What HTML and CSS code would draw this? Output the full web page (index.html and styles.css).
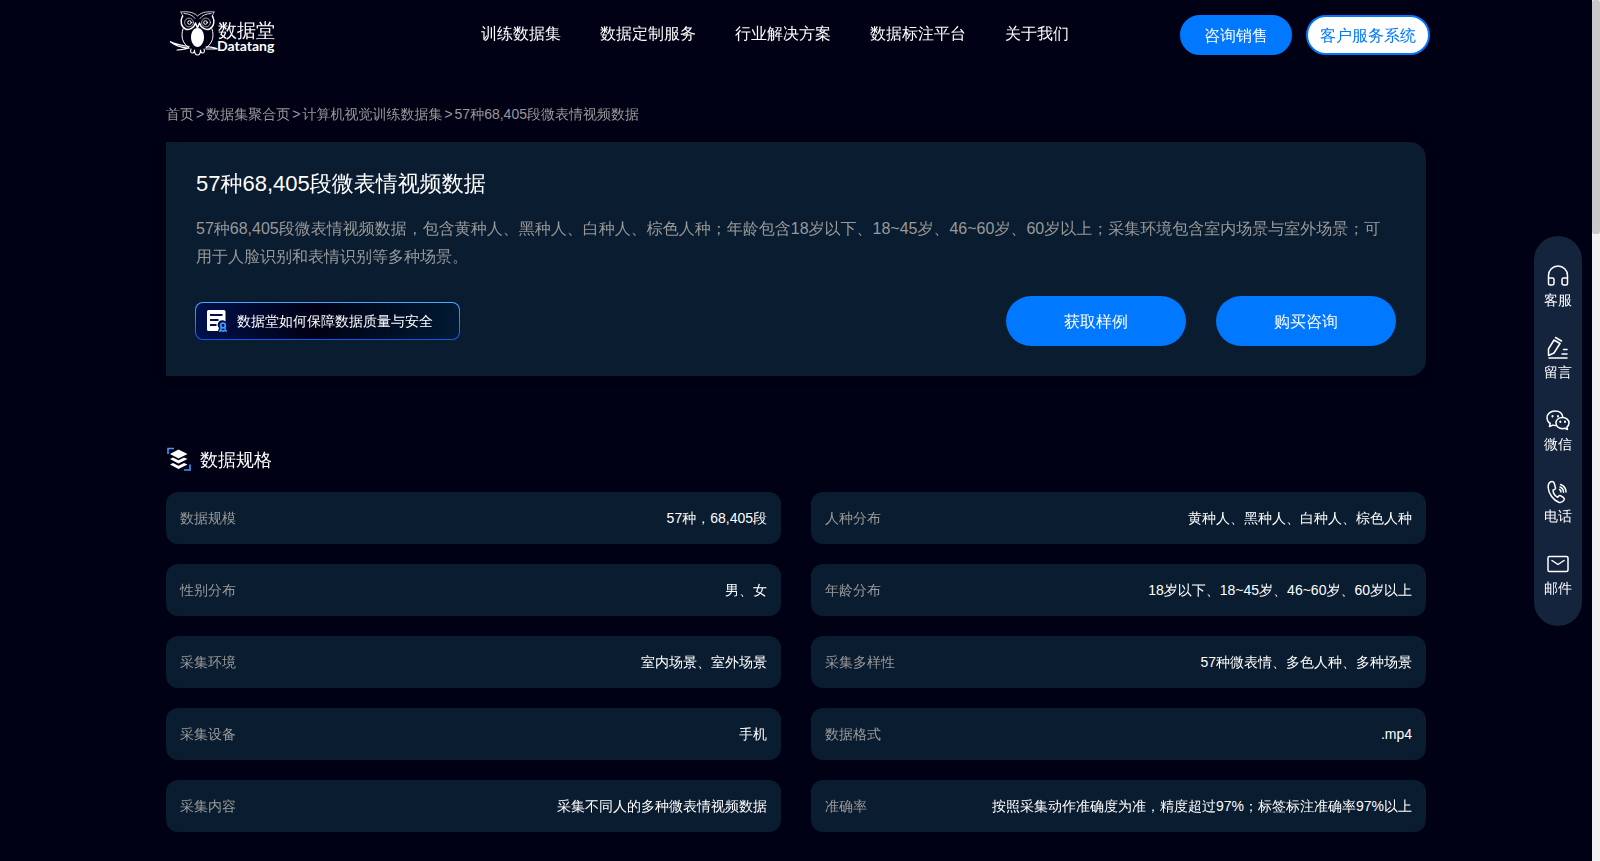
FILE: index.html
```html
<!DOCTYPE html>
<html lang="zh-CN">
<head>
<meta charset="utf-8">
<meta name="viewport" content="width=device-width, initial-scale=1">
<title>57种68,405段微表情视频数据 - 数据堂</title>
<link rel="stylesheet" href="styles.css">
</head>
<body>
<div class="page">
  <div class="container">
    <header class="header">
      <a class="logo" href="#" aria-label="数据堂 Datatang">
        <svg width="108" height="46" viewBox="0 0 108 46" fill="none" stroke="#fff" stroke-linecap="round" stroke-linejoin="round">
          <path d="M11 2c6-.500 12-.500 16.500 4C32 1.500 38 1.500 44 2M11 2c1 2 1 3 2 4M44 2c-1 2-1 3-2 4M14 3.500c5 0 9 2 11 5M41 3.500c-5 0-9 2-11 5" stroke-width="0.800"/>
          <path d="M12.500 6c-2.500 5-1.500 11 3 13 4 1.500 8.500-1 10-6l2 5 2-5c1.500 5 6 7.500 10 6 4.500-2 5.500-8 3-13" stroke-width="1.500"/>
          <circle cx="19" cy="12.500" r="4.400" stroke-width="0.600"/>
          <circle cx="36" cy="12.500" r="4.400" stroke-width="0.600"/>
          <circle cx="19.500" cy="12.500" r="1.800" stroke-width="1"/>
          <circle cx="35.500" cy="12.500" r="1.800" stroke-width="1"/>
          <path d="M13 19c-2.500 8-.500 14 6 19M42 19c2.500 8 .500 14-6 19" stroke-width="1"/>
          <path d="M27.500 18c4.500 0 6.500 5 6.500 9.500S31 37 27.500 37 21 32 21 27.500 23 18 27.500 18z" fill="#fff" stroke="none"/>
          <path d="M0 31.500c6 3 12 4 19 5M0 31.500c5 4 10 6 18 6.500M7 40c4 0 8-1 12-2M36 37c5-1 7 1 11 1.500M36 39h11" stroke-width="1.200"/>
          <path d="M21 39c-1 3 0 4 1.500 4s2-1 2-3c0 4 1 5 3 5s3-1 3-5c0 2 .500 3 2 3s2.500-1 1.500-4" stroke-width="1.100"/>
          <text class="logo-cn" x="48" y="27">数据堂</text>
          <text class="logo-en" x="47" y="41">Datatang</text>
        </svg>
      </a>
      <nav class="nav">
        <a href="#">训练数据集</a>
        <a href="#">数据定制服务</a>
        <a href="#">行业解决方案</a>
        <a href="#">数据标注平台</a>
        <a href="#">关于我们</a>
      </nav>
      <div class="header-actions">
        <button class="pill pill-sales" type="button">咨询销售</button>
        <button class="pill pill-service" type="button">客户服务系统</button>
      </div>
    </header>

    <nav class="breadcrumb" aria-label="面包屑">
      <a href="#">首页</a><span>&gt;</span><a href="#">数据集聚合页</a><span>&gt;</span><a href="#">计算机视觉训练数据集</a><span>&gt;</span><a href="#">57种68,405段微表情视频数据</a>
    </nav>

    <section class="hero">
      <h1>57种68,405段微表情视频数据</h1>
      <p>57种68,405段微表情视频数据，包含黄种人、黑种人、白种人、棕色人种；年龄包含18岁以下、18~45岁、46~60岁、60岁以上；采集环境包含室内场景与室外场景；可用于人脸识别和表情识别等多种场景。</p>
      <div class="hero-actions">
        <a class="quality" href="#">
          <svg width="20" height="22" viewBox="0 0 20 22" fill="none">
            <path d="M1.500 0h15.500a1.500 1.500 0 0 1 1.500 1.500V11.500a4.500 4.500 0 0 0-6.500 6.500L11 21H1.500A1.500 1.500 0 0 1 0 19.500v-18A1.500 1.500 0 0 1 1.500 0z" fill="#fff"/>
            <path d="M3 5h12.500M3 10h8.500M3 15h6.500" stroke="#07103c" stroke-width="1.800"/>
            <circle cx="16" cy="15.500" r="2.300" stroke="#3b9cff" stroke-width="1.800"/>
            <path d="M14.500 17.500l-1.500 3.500 2-.500 1 1M17.500 17.500l1.500 3.500-2-.500-1 1" stroke="#3b9cff" stroke-width="1.500"/>
          </svg>
          <span>数据堂如何保障数据质量与安全</span>
        </a>
        <div class="cta">
          <button class="cta-button" type="button">获取样例</button>
          <button class="cta-button" type="button">购买咨询</button>
        </div>
      </div>
    </section>

    <section class="specs">
      <h2>
        <svg width="26" height="26" viewBox="0 0 26 26" fill="#fff">
          <path d="M12.500 2.500L21.500 7l-9 4.500L4 7z"/>
          <path d="M4 12l3-1.500 5.500 2.700 5.500-2.700 3.500 1.500-9 4.500z"/>
          <path d="M4 17.500L7 16l5.500 2.700L18 16l3.500 1.500-9 4.500z"/>
          <path d="M2 7V1.500h6M24 17.500V23h-6" fill="none" stroke="#3b9cff" stroke-width="1.600"/>
        </svg>
        数据规格
      </h2>
      <dl class="spec-grid">
        <div><dt>数据规模</dt><dd>57种，68,405段</dd></div>
        <div><dt>人种分布</dt><dd>黄种人、黑种人、白种人、棕色人种</dd></div>
        <div><dt>性别分布</dt><dd>男、女</dd></div>
        <div><dt>年龄分布</dt><dd>18岁以下、18~45岁、46~60岁、60岁以上</dd></div>
        <div><dt>采集环境</dt><dd>室内场景、室外场景</dd></div>
        <div><dt>采集多样性</dt><dd>57种微表情、多色人种、多种场景</dd></div>
        <div><dt>采集设备</dt><dd>手机</dd></div>
        <div><dt>数据格式</dt><dd>.mp4</dd></div>
        <div><dt>采集内容</dt><dd>采集不同人的多种微表情视频数据</dd></div>
        <div><dt>准确率</dt><dd>按照采集动作准确度为准，精度超过97%；标签标注准确率97%以上</dd></div>
      </dl>
    </section>
  </div>
</div>
<div class="scroll-track"><div class="scroll-thumb"></div></div>

<aside class="dock">
  <a href="#">
    <svg width="24" height="24" viewBox="0 0 24 24">
      <path d="M2.500 14v-2.500a9.500 9.500 0 0 1 19 0V14M2.500 14h4a1.500 1.500 0 0 1 1.500 1.500V19a2 2 0 0 1-2 2H4a1.500 1.500 0 0 1-1.500-1.500zM21.500 14h-4a1.500 1.500 0 0 0-1.500 1.500V19a2 2 0 0 0 2 2h2a1.500 1.500 0 0 0 1.500-1.500z"/>
    </svg>
    <span>客服</span>
  </a>
  <a href="#">
    <svg width="24" height="24" viewBox="0 0 24 24">
      <path d="M8 4l6 3.500M9.500 1.500l6 3.500M8 4L2.500 13v6.500l5.500-2.500L14 7.500M3 22h18M17.500 13.500h3.500M16 18h5"/>
    </svg>
    <span>留言</span>
  </a>
  <a href="#">
    <svg width="24" height="24" viewBox="0 0 24 24">
      <path d="M9.500 17.500c-1 0-1.800-.100-2.600-.400L3.500 18.500l.700-3A7 7 0 0 1 1 10c0-4.200 3.600-7 8-7 4 0 7.300 2.200 7.800 6"/>
      <path d="M16.500 9.500c3.800 0 6.500 2.500 6.500 5.500 0 1.700-.800 3-2.100 4l.600 2.500-2.500-1.200c-.800.200-1.600.400-2.500.400-3.800 0-6.500-2.500-6.500-5.700s2.700-5.500 6.500-5.500z"/>
      <path d="M6.500 8v.500M12 8v.500M14.300 13.500v.500M19 13.500v.500" stroke-width="2"/>
    </svg>
    <span>微信</span>
  </a>
  <a href="#">
    <svg width="24" height="24" viewBox="0 0 24 24">
      <path d="M5 1.800c-1.800.700-3 2.800-2.800 6 .300 6 5.300 12.500 10.500 14.500 2 .600 4.300-.500 5.300-2.300.500-1 .300-1.700-.500-2.300l-3-2c-.800-.400-1.500-.200-2 .500l-.800 1c-2.500-1.200-4.500-4.200-4.700-7l1.700-.800c.700-.400 1-1 .700-1.800L8.300 3.400C7.500 1.600 6.300 1.300 5 1.800z"/>
      <path d="M13.500 9.500c1 .500 1.500 1.300 1.500 2.500M14 7c2.200.900 3.500 2.500 3.500 5.200M14.500 4.500c3.500 1.300 5.500 4 5.500 7.500"/>
    </svg>
    <span>电话</span>
  </a>
  <a href="#">
    <svg width="24" height="24" viewBox="0 0 24 24">
      <rect x="2" y="4.500" width="20" height="15" rx="1.500"/>
      <path d="M6 8.500l6 4 6-4"/>
    </svg>
    <span>邮件</span>
  </a>
</aside>
</body>
</html>
```
FILE: styles.css
```css
* { box-sizing: border-box; }

body {
  margin: 0;
  display: flex;
  min-height: 100vh;
  background: #010115;
  color: #fff;
  font-family: "Liberation Sans", "WenQuanYi Zen Hei", "Droid Sans Fallback", "Noto Sans CJK SC", sans-serif;
  font-size: 14px;
  line-height: 20px;
}

a { color: inherit; text-decoration: none; }
button { font: inherit; cursor: pointer; }
h1, h2, p, dl, dd { margin: 0; font-weight: 400; }

.page { flex: 1; min-width: 0; }
.container { max-width: 1300px; margin: 0 auto; padding: 0 20px 28px; }

.header { display: flex; align-items: center; height: 70px; }
.logo { display: block; margin-left: 4px; height: 50px; }
.logo svg { display: block; }
.logo-cn { font-size: 19px; fill: #fff; stroke: none; }
.logo-en { font-family: Lato, sans-serif; font-size: 14px; font-weight: 700; fill: #fff; stroke: none; }
.nav { display: flex; gap: 39px; margin-left: 203px; padding-bottom: 2px; font-size: 16px; white-space: nowrap; }
.header-actions { display: flex; gap: 14px; margin-left: auto; margin-right: -4px; }

.pill { height: 40px; border: 2px solid #0078ff; border-radius: 20px; padding: 2px 0 0; font-size: 16px; white-space: nowrap; }
.pill-sales { width: 112px; background: #0078ff; color: #fff; }
.pill-service { width: 124px; background: #fff; color: #0078ff; }

.breadcrumb { padding: 34px 0 18px; color: #999; }
.breadcrumb span { margin: 0 2px; }

.hero {
  padding: 27px 30px 30px;
  border-radius: 0 16px 16px 0;
  background: #0a1c30;
  box-shadow: 0 0 12px rgba(0, 0, 0, 0.3);
}
.hero h1 { font-size: 22px; line-height: 30px; }
.hero p { margin-top: 16px; font-size: 16px; line-height: 28px; color: #999; }
.hero-actions { display: flex; align-items: center; justify-content: space-between; margin-top: 25px; }

.quality {
  display: flex;
  align-items: center;
  gap: 10px;
  height: 38px;
  margin-left: -1px;
  padding: 0 26px 0 11px;
  border: 1px solid transparent;
  border-radius: 8px;
  background:
    linear-gradient(90deg, #00104a, #010115 45%, #001a33) padding-box,
    linear-gradient(#4da6ff, #0a5cf0) border-box;
}
.cta { display: flex; gap: 30px; }
.cta-button { width: 180px; height: 50px; border: 0; border-radius: 25px; padding: 2px 0 0; background: #0078ff; color: #fff; font-size: 16px; }

.specs { padding-top: 71px; }
.specs h2 { display: flex; align-items: center; gap: 8px; font-size: 18px; line-height: 24px; }
.spec-grid { display: grid; grid-template-columns: 1fr 1fr; gap: 20px 30px; margin-top: 19px; }
.spec-grid div {
  display: flex;
  align-items: center;
  justify-content: space-between;
  height: 52px;
  padding: 0 14px;
  border-radius: 12px;
  background: #0a1c30;
}
.spec-grid dt { color: #999; }

.dock {
  position: fixed;
  top: 236px;
  right: 18px;
  display: flex;
  flex-direction: column;
  gap: 26px;
  width: 48px;
  padding: 28px 0;
  border-radius: 24px;
  background: #15243d;
}
.dock a { display: flex; flex-direction: column; align-items: center; gap: 2px; }
.dock svg { fill: none; stroke: #fff; stroke-width: 1.5; stroke-linecap: round; stroke-linejoin: round; }

.scroll-track { width: 8px; background: #f1f1f1; }
.scroll-thumb { height: 234px; border-radius: 3px; background: #c9c9c9; }
```
